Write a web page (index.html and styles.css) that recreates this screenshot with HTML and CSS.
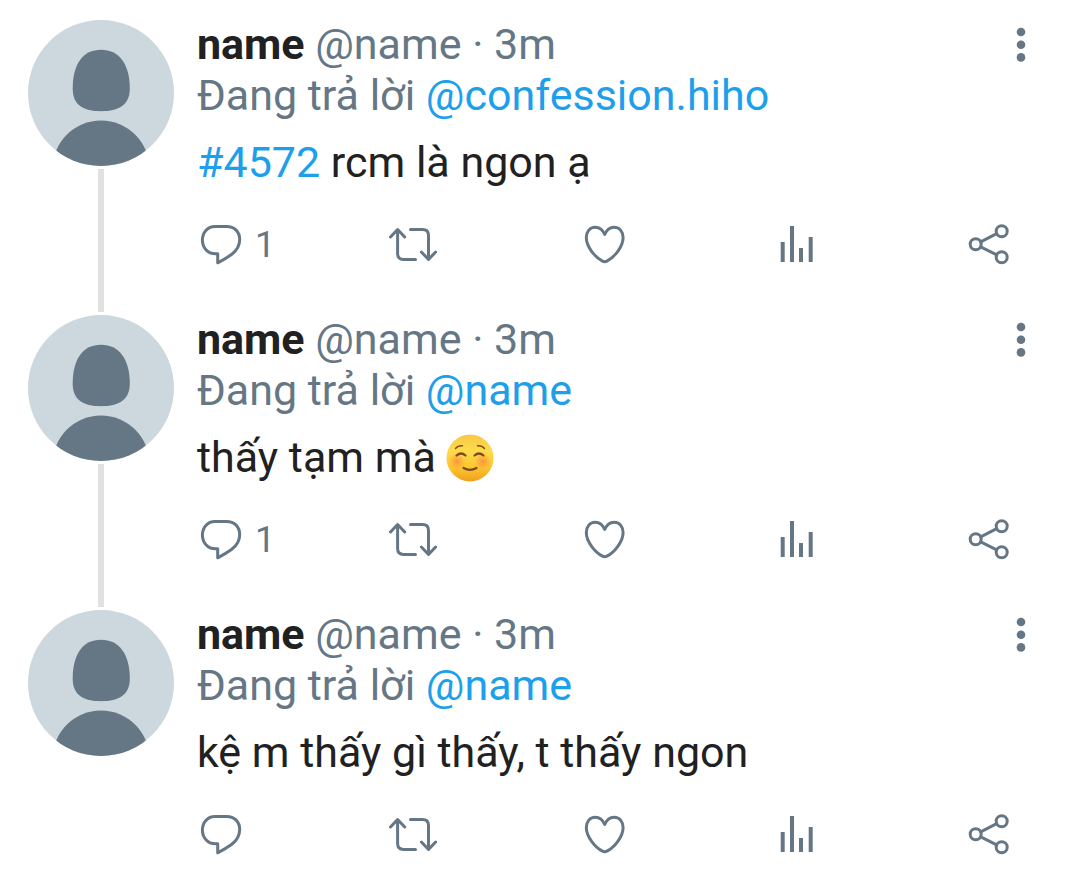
FILE: index.html
```html
<!DOCTYPE html>
<html lang="vi">
<head>
  <meta charset="UTF-8">
  <meta name="viewport" content="width=device-width, initial-scale=1.0">
  <title>Thread</title>
  <link rel="stylesheet" href="styles.css">
</head>
<body>
  <!-- shared icons -->
  <svg class="sprite" aria-hidden="true">
    <symbol id="avatar" viewBox="0 0 146 146">
      <clipPath id="round"><circle cx="73" cy="73" r="73"/></clipPath>
      <g clip-path="url(#round)">
        <rect width="146" height="146" fill="#ccd8dd"/>
        <path fill="#657785" d="M73 29.700C91 29.700 101.800 44 101.800 68.500C101.800 85 91 91.200 73 91.200C55 91.200 44.700 85 44.700 68.500C44.700 44 55 29.700 73 29.700Z"/>
        <circle cx="73" cy="149" r="48.500" fill="#657785"/>
      </g>
    </symbol>
    <symbol id="reply" viewBox="0 0 48 48">
      <path d="M18 5.400H29.500C37.500 5.400 42.700 11 42.700 18.500C42.700 25 40 29.500 34.500 33.500C30 36.800 25.500 39.300 20.700 41.800V32.800H18.500C10.500 32.800 5.400 26.500 5.400 19C5.400 11.500 10.500 5.400 18 5.400Z"/>
    </symbol>
    <symbol id="retweet" viewBox="0 0 48 48">
      <path d="M1.500 16L8.600 8.500L15.700 16M8.600 9V32.500C8.600 36.500 10.500 38.400 14.500 38.400H26.500M21.500 8.600H33.500C37.500 8.600 39.500 10.500 39.500 14.500V38M32.400 31L39.500 38.500L46.600 31"/>
    </symbol>
    <symbol id="heart" viewBox="0 0 48 48">
      <path d="M23.700 13.500C21.500 8.500 18 6.300 14.300 6.300C8.500 6.300 5.300 11 5.300 16.500C5.300 26 14.500 36.500 21.500 40.200Q23.700 41.300 25.900 40.200C33 36.500 42.100 26 42.100 16.500C42.100 11 38.900 6.300 33.100 6.300C29.400 6.300 25.900 8.500 23.700 13.500Z"/>
    </symbol>
    <symbol id="stats" viewBox="0 0 48 48">
      <path d="M9.700 21V41M19 5V41M28 27V41M37.700 16V41" stroke-width="4" stroke-linecap="butt"/>
    </symbol>
    <symbol id="share" viewBox="0 0 48 48">
      <circle cx="10.700" cy="23.300" r="5.500"/>
      <circle cx="36.700" cy="10.200" r="5.500"/>
      <circle cx="36.700" cy="36.300" r="5.500"/>
      <path d="M15.700 20.800L31.700 12.700M15.700 25.800L31.700 33.800"/>
    </symbol>
    <symbol id="dots" viewBox="0 0 16 48">
      <circle cx="8" cy="11" r="4.300"/>
      <circle cx="8" cy="23.700" r="4.300"/>
      <circle cx="8" cy="36.400" r="4.300"/>
    </symbol>
  </svg>

  <main class="thread">
    <article class="tweet">
      <div class="side">
        <svg class="avatar" aria-hidden="true"><use href="#avatar"/></svg>
        <div class="line"></div>
      </div>
      <div class="content">
        <header class="top">
          <div class="meta"><b class="name">name</b> @name · 3m</div>
          <button class="more" aria-label="Thêm"><svg><use href="#dots"/></svg></button>
        </header>
        <div class="meta">Đang trả lời <a href="#">@confession.hiho</a></div>
        <p class="text"><a href="#">#4572</a> rcm là ngon ạ</p>
        <div class="actions">
          <button class="action" aria-label="Trả lời"><svg><use href="#reply"/></svg><span>1</span></button>
          <button class="action" aria-label="Tweet lại"><svg><use href="#retweet"/></svg></button>
          <button class="action" aria-label="Thích"><svg><use href="#heart"/></svg></button>
          <button class="action" aria-label="Thống kê"><svg><use href="#stats"/></svg></button>
          <button class="action" aria-label="Chia sẻ"><svg><use href="#share"/></svg></button>
        </div>
      </div>
    </article>

    <article class="tweet">
      <div class="side">
        <svg class="avatar" aria-hidden="true"><use href="#avatar"/></svg>
        <div class="line"></div>
      </div>
      <div class="content">
        <header class="top">
          <div class="meta"><b class="name">name</b> @name · 3m</div>
          <button class="more" aria-label="Thêm"><svg><use href="#dots"/></svg></button>
        </header>
        <div class="meta">Đang trả lời <a href="#">@name</a></div>
        <p class="text">thấy tạm mà
          <svg class="emoji" viewBox="0 0 48 48" role="img" aria-label="☺️">
            <defs>
              <linearGradient id="face" x1="0" y1="0" x2="0" y2="1">
                <stop offset="0" stop-color="#f9c846"/>
                <stop offset="0.350" stop-color="#fddb4c"/>
                <stop offset="0.700" stop-color="#fcc62f"/>
                <stop offset="1" stop-color="#f0a01e"/>
              </linearGradient>
              <radialGradient id="blush">
                <stop offset="0" stop-color="#fb7a3c" stop-opacity="0.700"/>
                <stop offset="1" stop-color="#fb8a3c" stop-opacity="0"/>
              </radialGradient>
            </defs>
            <circle cx="24" cy="24" r="23.500" fill="url(#face)"/>
            <circle cx="11" cy="27.500" r="8.500" fill="url(#blush)"/>
            <circle cx="37" cy="27.500" r="8.500" fill="url(#blush)"/>
            <g fill="none" stroke="#7a4a22" stroke-linecap="round">
              <path stroke-width="1.400" d="M9.500 14.500Q12 11.500 16.500 11.800M31.500 11.800Q36 11.500 38.500 14.500"/>
              <path stroke-width="2.200" d="M10.500 21.500Q15 17.500 19.500 21.500M28.500 21.500Q33 17.500 37.500 21.500"/>
              <path stroke-width="2.200" d="M17.500 34Q24 37.800 30.500 34"/>
            </g>
          </svg>
        </p>
        <div class="actions">
          <button class="action" aria-label="Trả lời"><svg><use href="#reply"/></svg><span>1</span></button>
          <button class="action" aria-label="Tweet lại"><svg><use href="#retweet"/></svg></button>
          <button class="action" aria-label="Thích"><svg><use href="#heart"/></svg></button>
          <button class="action" aria-label="Thống kê"><svg><use href="#stats"/></svg></button>
          <button class="action" aria-label="Chia sẻ"><svg><use href="#share"/></svg></button>
        </div>
      </div>
    </article>

    <article class="tweet">
      <div class="side">
        <svg class="avatar" aria-hidden="true"><use href="#avatar"/></svg>
      </div>
      <div class="content">
        <header class="top">
          <div class="meta"><b class="name">name</b> @name · 3m</div>
          <button class="more" aria-label="Thêm"><svg><use href="#dots"/></svg></button>
        </header>
        <div class="meta">Đang trả lời <a href="#">@name</a></div>
        <p class="text">kệ m thấy gì thấy, t thấy ngon</p>
        <div class="actions">
          <button class="action" aria-label="Trả lời"><svg><use href="#reply"/></svg></button>
          <button class="action" aria-label="Tweet lại"><svg><use href="#retweet"/></svg></button>
          <button class="action" aria-label="Thích"><svg><use href="#heart"/></svg></button>
          <button class="action" aria-label="Thống kê"><svg><use href="#stats"/></svg></button>
          <button class="action" aria-label="Chia sẻ"><svg><use href="#share"/></svg></button>
        </div>
      </div>
    </article>
  </main>
</body>
</html>
```

FILE: styles.css
```css
body {
  margin: 0;
  background: #fff;
  color: #212121;
  font-family: Roboto, "Noto Sans", sans-serif;
  font-size: 43px;
  line-height: 51px;
}
a {
  color: #1d9fec;
  text-decoration: none;
}
button {
  padding: 0;
  border: none;
  background: none;
  color: #657785;
  font-family: inherit;
  cursor: pointer;
}
.sprite {
  position: absolute;
  width: 0;
  height: 0;
}
.thread {
  padding: 19px 51px 0 28px;
}
.tweet {
  display: flex;
  gap: 23px;
}
.side {
  display: flex;
  flex-direction: column;
  align-items: center;
  flex: none;
  padding-top: 1px;
}
.avatar {
  display: block;
  width: 146px;
  height: 146px;
}
.line {
  flex: 1;
  width: 6px;
  margin: 3px 0 2px;
  background: #e1e1e1;
}
.content {
  flex: 1;
  min-width: 0;
  padding-bottom: 45px;
}
.tweet:last-child .content {
  padding-bottom: 0;
}
.top {
  display: flex;
  justify-content: space-between;
}
.meta {
  color: #657785;
}
.name {
  color: #212121;
}
.more svg {
  display: block;
  width: 16px;
  height: 48px;
  fill: #657785;
}
.text {
  margin: 16px 0 33px;
}
.emoji {
  width: 48px;
  height: 48px;
  vertical-align: -10px;
}
.actions {
  display: grid;
  grid-template-columns: repeat(4, 1fr) 48px;
  margin-right: 16px;
}
.action {
  display: flex;
  align-items: center;
  gap: 10px;
  font-size: 36px;
  line-height: 48px;
}
.action svg {
  width: 48px;
  height: 48px;
  fill: none;
  stroke: #657785;
  stroke-width: 3px;
  stroke-linecap: round;
  stroke-linejoin: round;
}
```
